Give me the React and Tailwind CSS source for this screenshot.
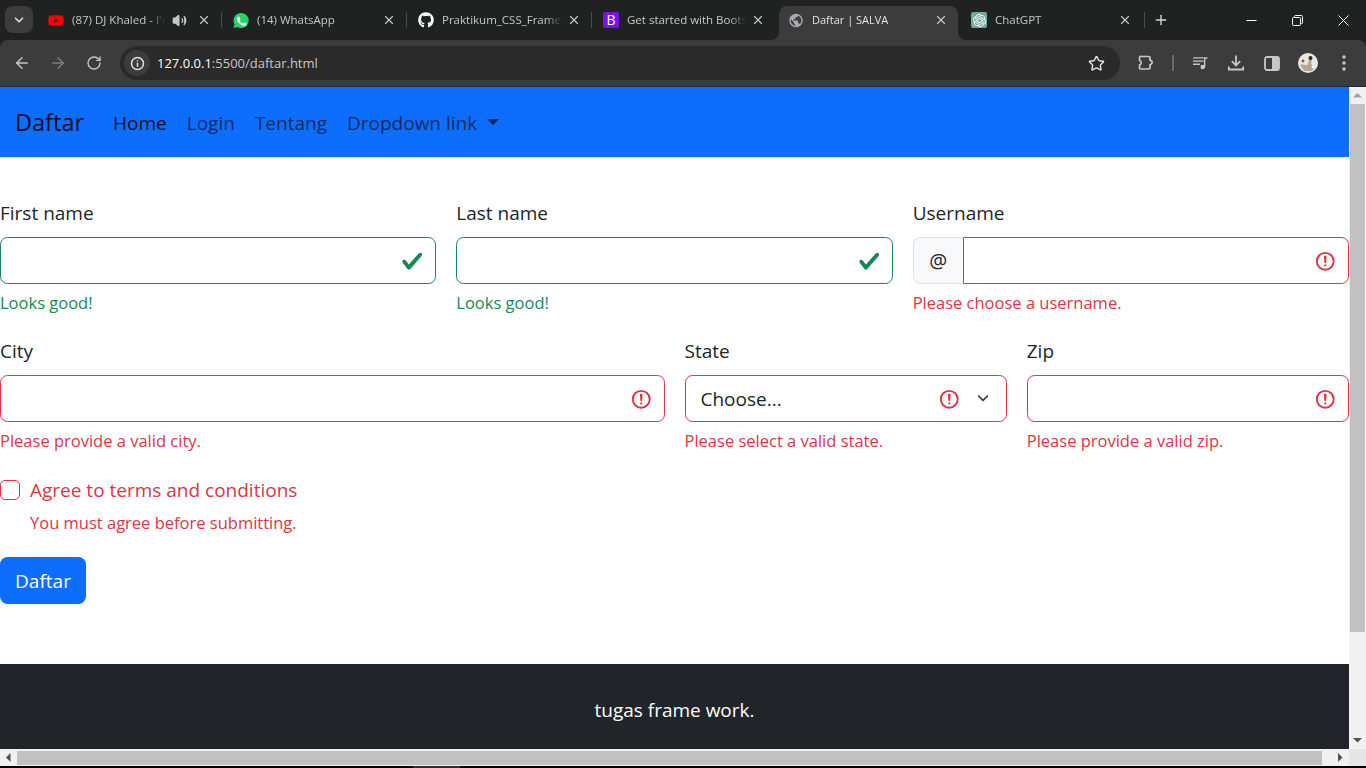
import React from 'react';
import { ArrowLeft, ArrowRight, RotateCw, Star, X, Plus, ChevronDown, Volume2 } from 'lucide-react';
import { FaYoutube, FaGithub } from 'react-icons/fa';
import { MdPublic } from 'react-icons/md';
import { SiOpenai } from 'react-icons/si';

const InvalidIcon = () => (
  <svg viewBox="0 0 12 12" width="22.5" height="22.5" fill="none" stroke="#dc3545">
    <circle cx="6" cy="6" r="4.5" />
    <path strokeLinejoin="round" d="M5.8 3.6h.4L6 6.5z" />
    <circle cx="6" cy="8.2" r=".6" fill="#dc3545" stroke="none" />
  </svg>
);

const ValidIcon = () => (
  <svg viewBox="0 0 8 8" width="22.5" height="22.5">
    <path fill="#198754" d="M2.3 6.73.6 4.53c-.4-1.04.46-1.4 1.1-.8l1.1 1.4 3.4-3.8c.6-.63 1.6-.27 1.2.7l-4 4.6c-.43.5-.8.4-1.1.1z" />
  </svg>
);

const WhatsAppIcon = () => (
  <svg width="17" height="17" viewBox="0 0 17 17">
    <path fill="#25d366" d="M8.5.5a8 8 0 0 0-6.9 12L.5 16.5l4.1-1.1A8 8 0 1 0 8.5.5z" />
    <path fill="#fff" d="M5.9 4.2c-.3 0-.7.1-1 .5-.4.4-.9 1-.9 2.2 0 1.3.9 2.5 1.1 2.7.1.2 1.8 2.9 4.5 3.9 2.2.8 2.7.7 3.2.6.5 0 1.5-.6 1.7-1.2.2-.6.2-1.1.1-1.2-.1-.1-.2-.2-.5-.3l-1.7-.8c-.3-.1-.4-.1-.6.1l-.8 1c-.1.2-.3.2-.6.1-.7-.3-1.4-.6-2.1-1.3-.6-.6-1-1.2-1.2-1.6-.1-.3 0-.4.1-.5l.6-.8c.1-.2.1-.3 0-.5l-.8-1.9c-.2-.5-.4-.4-.6-.4z" />
  </svg>
);

const Tab = ({ icon, title, active, className, audio, sep = true }) => (
  <div className={`relative flex h-[34px] shrink-0 items-center pb-[6px] ${className} ${active ? 'rounded-t-[8px] bg-[#3c3c3c]' : ''}`}>
    {active && (
      <>
        <svg className="absolute bottom-0 left-[-8px]" width="8" height="8"><path d="M8 0v8H0a8 8 0 0 0 8-8z" fill="#3c3c3c" /></svg>
        <svg className="absolute bottom-0 right-[-8px]" width="8" height="8"><path d="M0 0v8h8a8 8 0 0 1-8-8z" fill="#3c3c3c" /></svg>
      </>
    )}
    <div className="flex h-4 w-4 shrink-0 items-center justify-center">{icon}</div>
    <div className={`ml-2 min-w-0 flex-1 overflow-hidden whitespace-nowrap [mask-image:linear-gradient(to_left,transparent,black_16px)] ${active ? 'text-[11px] text-[#e3e3e3]' : 'text-[11.5px] text-[#c7c7c7]'}`}>
      {title}
    </div>
    {audio && <Volume2 size={15} strokeWidth={2} fill="currentColor" className="ml-[7px] shrink-0 text-[#c7c7c7]" />}
    <X size={14} strokeWidth={2} className={`shrink-0 text-[#c7c7c7] ${audio ? 'ml-[10px]' : 'ml-[5px]'}`} />
    {sep && <span className="absolute right-0 top-[6px] h-[16px] w-px bg-[#4a4a4a]" />}
  </div>
);

const TabStrip = () => (
  <div className="flex h-10 shrink-0 items-end bg-[#202121] pl-[5px]">
    <div className="mb-[7px] flex h-[27px] w-[28px] shrink-0 items-center justify-center rounded-[8px] bg-[#3c3c3c]">
      <ChevronDown size={14} strokeWidth={3} className="text-[#d8d8d8]" />
    </div>
    <div className="ml-1 flex">
      <Tab className="w-[185px] pl-[11px] pr-[11px]" audio title="(87) DJ Khaled - I'm the One" icon={<FaYoutube size={17} className="text-[#ff0000]" />} />
      <Tab className="w-[185px] pl-[11px] pr-[11px]" title="(14) WhatsApp" icon={<WhatsAppIcon />} />
      <Tab className="w-[185px] pl-[11px] pr-[11px]" title="Praktikum_CSS_Framework" icon={<FaGithub size={16} className="text-white" />} />
      <Tab className="w-[185px] pl-[11px] pr-[12px]" sep={false} title="Get started with Bootstrap" icon={
        <div className="flex h-4 w-4 items-center justify-center rounded-[2px] bg-[#7a10f0] text-[14px] font-medium leading-none text-white">B</div>
      } />
      <Tab className="ml-[2px] mr-[2px] w-[179px] pl-[9px] pr-[10px]" active sep={false} title="Daftar | SALVA" icon={<MdPublic size={19} className="text-[#a8acb2]" />} />
      <Tab className="w-[185px] pl-[11px] pr-[13px]" title="ChatGPT" icon={
        <div className="flex h-4 w-4 items-center justify-center rounded-[2px] bg-[#74aa9c]"><SiOpenai size={13} className="text-white" /></div>
      } />
    </div>
    <div className="mb-[7px] ml-[8px] flex h-[27px] w-[16px] shrink-0 items-center justify-center">
      <Plus size={16} strokeWidth={2} className="text-[#d8d8d8]" />
    </div>
    <div className="ml-auto flex h-10 shrink-0 self-start text-white">
      <div className="flex w-[46px] items-center justify-center">
        <svg width="11" height="11" viewBox="0 0 11 11"><path d="M0.5 5.5h10" stroke="currentColor" /></svg>
      </div>
      <div className="flex w-[46px] items-center justify-center">
        <svg width="11" height="11" viewBox="0 0 11 11" fill="none" stroke="currentColor"><rect x="0.5" y="2.5" width="8" height="8" rx="1" /><path d="M2.5 2.5v-1a1 1 0 0 1 1-1h6a1 1 0 0 1 1 1v6a1 1 0 0 1-1 1h-1" /></svg>
      </div>
      <div className="flex w-[46px] items-center justify-center">
        <svg width="11" height="11" viewBox="0 0 11 11" stroke="currentColor"><path d="M0.5 0.5l10 10M10.5 0.5l-10 10" /></svg>
      </div>
    </div>
  </div>
);

const ToolbarBtn = ({ children }) => (
  <div className="flex h-9 w-9 shrink-0 items-center justify-center text-[#c7c7c7]">{children}</div>
);

const Toolbar = () => (
  <div className="bg-[#202121]">
    <div className="flex h-[47px] items-center rounded-t-[8px] border-b border-[#1e2a3a] bg-[#3c3c3c] pl-1">
      <ToolbarBtn><ArrowLeft size={18} strokeWidth={2} /></ToolbarBtn>
      <ToolbarBtn><ArrowRight size={18} strokeWidth={2} className="text-[#7d7d7d]" /></ToolbarBtn>
      <ToolbarBtn><RotateCw size={16} strokeWidth={2} /></ToolbarBtn>
      <div className="ml-2 flex h-[34px] w-[1000px] shrink-0 items-center rounded-full bg-[#2a2a2a] pl-1 pr-[15px]">
        <div className="flex h-[26px] w-[26px] items-center justify-center rounded-full bg-[#3c3c3c]">
          <svg width="15" height="15" viewBox="0 0 15 15" fill="none" stroke="#e3e3e3" strokeWidth="1.5">
            <circle cx="7.5" cy="7.5" r="6" />
            <path d="M7.5 6.8v4M7.5 4.2v1.4" />
          </svg>
        </div>
        <div className="ml-[7px] pt-[1px] text-[13px]"><span className="text-white">127.0.0.1</span><span className="text-[#c7c7c7]">:5500/daftar.html</span></div>
        <Star size={17} strokeWidth={2} className="ml-auto text-[#e3e3e3]" />
      </div>
      <div className="ml-2 flex items-center">
        <ToolbarBtn>
          <svg width="18" height="18" viewBox="0 0 18 18" fill="none" stroke="currentColor" strokeWidth="1.7" strokeLinejoin="round">
            <path d="M4.5 2.5h7.2a1.3 1.3 0 0 1 1.3 1.3v2.5a2 2 0 0 1 0 4.2v3.2a1.3 1.3 0 0 1-1.3 1.3H3.8a1.3 1.3 0 0 1-1.3-1.3v-2.6a2.4 2.4 0 0 0 0-4.6V3.8a1.3 1.3 0 0 1 2-1.3z" />
          </svg>
        </ToolbarBtn>
        <div className="flex w-[18px] justify-center"><span className="h-[16px] w-[1.5px] bg-[#6a6a6a]" /></div>
        <ToolbarBtn>
          <svg width="15" height="14" viewBox="0 0 17 15" fill="currentColor">
            <path d="M0 1h12v1.5H0zM0 4.6h12v1.5H0zM0 8.2h8v1.5H0z" />
            <circle cx="11" cy="12" r="2.6" />
            <path d="M12.4 1h4v1.7h-2.4V12h-1.6z" />
          </svg>
        </ToolbarBtn>
        <ToolbarBtn>
          <svg width="18" height="18" viewBox="0 0 18 18" fill="none" stroke="currentColor" strokeWidth="1.8">
            <path d="M9 1.5v9.5M4.8 7.2 9 11.4l4.2-4.2M1.8 12.5v3h14.4v-3" />
          </svg>
        </ToolbarBtn>
        <ToolbarBtn>
          <svg width="16" height="15" viewBox="0 0 16 15">
            <rect x="1" y="1" width="14" height="13" rx="2" fill="none" stroke="currentColor" strokeWidth="1.8" />
            <rect x="8" y="1" width="7" height="13" fill="currentColor" />
          </svg>
        </ToolbarBtn>
        <ToolbarBtn>
          <svg width="20" height="20" viewBox="0 0 20 20">
            <circle cx="10" cy="10" r="10" fill="#ece8e0" />
            <path d="M2 12c3-2 5 1 7 0s1-5 3-7l2 1-1 5 4 3-3 4H6z" fill="#b5a88f" />
            <circle cx="12.5" cy="5" r="2" fill="#2f2a26" />
            <circle cx="5" cy="8" r="1.4" fill="#7a5f3e" />
            <circle cx="15" cy="14" r="1.4" fill="#fff" />
          </svg>
        </ToolbarBtn>
        <ToolbarBtn>
          <svg width="4" height="16" viewBox="0 0 4 16" fill="currentColor"><circle cx="2" cy="2" r="1.7" /><circle cx="2" cy="8" r="1.7" /><circle cx="2" cy="14" r="1.7" /></svg>
        </ToolbarBtn>
      </div>
    </div>
  </div>
);

const Navbar = () => (
  <nav className="flex h-[70px] shrink-0 items-center bg-[#0d6efd] pl-[15px] pt-[2px]">
    <span className="text-[23.5px] text-black/90">Daftar</span>
    <ul className="ml-[29px] flex items-center gap-5 text-[19px] text-black/65">
      <li className="text-black/90">Home</li>
      <li>Login</li>
      <li>Tentang</li>
      <li className="flex items-center">
        Dropdown link
        <span className="mb-[2px] ml-[10px] h-0 w-0 border-x-[6px] border-t-[6px] border-x-transparent border-t-black/65" />
      </li>
    </ul>
  </nav>
);

const Field = ({ label, span, status, message, children }) => (
  <div className={span}>
    <label className="mb-[10px] block h-[30px] pt-[1px] text-[19px] leading-[30px] text-[#212529]">{label}</label>
    {children}
    <div className={`mt-[5px] h-[26px] pt-[1px] text-[16.5px] leading-[26px] ${status === 'valid' ? 'text-[#198754]' : 'text-[#dc3545]'}`}>{message}</div>
  </div>
);

const TextBox = ({ status, className = 'rounded-[7.5px]', wrap = '' }) => (
  <div className={`relative ${wrap}`}>
    <input className={`block h-[47px] w-full border bg-white ${className} ${status === 'valid' ? 'border-[#198754]' : 'border-[#dc3545]'}`} />
    <span className="pointer-events-none absolute right-[12.5px] top-[12.5px]">
      {status === 'valid' ? <ValidIcon /> : <InvalidIcon />}
    </span>
  </div>
);

const RegisterForm = () => (
  <form className="pt-10">
    <div className="grid grid-cols-12 gap-x-5 gap-y-5">
      <Field label="First name" span="col-span-4" status="valid" message="Looks good!"><TextBox status="valid" /></Field>
      <Field label="Last name" span="col-span-4" status="valid" message="Looks good!"><TextBox status="valid" /></Field>
      <Field label="Username" span="col-span-4" status="invalid" message="Please choose a username.">
        <div className="flex">
          <span className="flex h-[47px] w-[50px] shrink-0 items-center justify-center rounded-l-[7.5px] border border-r-0 border-[#dee2e6] bg-[#f8f9fa] text-[20px] text-[#212529]">@</span>
          <TextBox status="invalid" wrap="flex-1" className="rounded-r-[7.5px]" />
        </div>
      </Field>
      <Field label="City" span="col-span-6" status="invalid" message="Please provide a valid city."><TextBox status="invalid" /></Field>
      <Field label="State" span="col-span-3" status="invalid" message="Please select a valid state.">
        <div className="relative">
          <select className="block h-[47px] w-full appearance-none rounded-[7.5px] border border-[#dc3545] bg-white pl-[15px] pt-[1px] text-[19px] text-[#212529]">
            <option>Choose...</option>
          </select>
          <span className="pointer-events-none absolute right-[46px] top-[12.5px]"><InvalidIcon /></span>
          <svg className="pointer-events-none absolute right-[14px] top-[16px]" width="20" height="15" viewBox="0 0 16 12" fill="none" stroke="#343a40" strokeWidth="2" strokeLinecap="round" strokeLinejoin="round">
            <path d="m4.5 4 3.5 3.5L11.5 4" strokeWidth="1.4" />
          </svg>
        </div>
      </Field>
      <Field label="Zip" span="col-span-3" status="invalid" message="Please provide a valid zip."><TextBox status="invalid" /></Field>
    </div>
    <div className="mt-[22px] flex h-[30px] items-center">
      <input type="checkbox" className="h-5 w-5 appearance-none rounded-[5px] border border-[#dc3545] bg-white" />
      <label className="ml-[10px] pt-[1px] text-[19px] text-[#dc3545]">Agree to terms and conditions</label>
    </div>
    <div className="ml-[30px] mt-[5px] text-[16.5px] leading-[26px] text-[#dc3545]">You must agree before submitting.</div>
    <button type="button" className="mt-[21px] block h-[47px] w-[86px] rounded-[7.5px] bg-[#0d6efd] pt-[1px] text-[19px] text-white">Daftar</button>
  </form>
);

const Footer = () => (
  <footer className="mt-[60px] flex h-[92px] shrink-0 items-center justify-center bg-[#212529] pt-[1px] text-[19px] text-white">
    tugas frame work.
  </footer>
);

const Arrow = ({ dir }) => {
  const paths = {
    up: 'M0 4.5 4.5 0 9 4.5z',
    down: 'M0 0h9L4.5 4.5z',
    left: 'M4.5 0v9L0 4.5z',
    right: 'M0 0v9l4.5-4.5z',
  };
  const vertical = dir === 'up' || dir === 'down';
  return (
    <div className="flex h-[17px] w-[17px] shrink-0 items-center justify-center">
      <svg width={vertical ? 9 : 5} height={vertical ? 5 : 9} viewBox={vertical ? '0 0 9 5' : '0 0 5 9'}>
        <path d={paths[dir]} fill={dir === 'up' ? '#a3a3a3' : '#505050'} />
      </svg>
    </div>
  );
};

export default function App() {
  return (
    <div className="flex h-[768px] w-[1366px] flex-col overflow-hidden bg-white font-['Open_Sans',sans-serif]">
      <TabStrip />
      <Toolbar />
      <div className="flex min-h-0 flex-1">
        <div className="flex min-w-0 flex-1 flex-col overflow-hidden">
          <Navbar />
          <RegisterForm />
          <Footer />
        </div>
        <div className="flex w-[17px] shrink-0 flex-col bg-[#f1f1f1]">
          <Arrow dir="up" />
          <div className="mx-auto h-[528px] w-[15px] bg-[#c1c1c1]" />
          <div className="flex-1" />
          <Arrow dir="down" />
        </div>
      </div>
      <div className="flex h-[17px] shrink-0 items-center bg-[#f1f1f1]">
        <Arrow dir="left" />
        <div className="h-[14px] w-[1305px] bg-[#c1c1c1]" />
        <div className="flex-1" />
        <Arrow dir="right" />
        <div className="h-[17px] w-[17px] shrink-0 bg-[#e6e6e6]" />
      </div>
      <div className="flex h-[2px] shrink-0 bg-black pl-[413px]">
        <div className="h-[2px] w-[47px] bg-[#2e2e2e]" />
      </div>
    </div>
  );
}
